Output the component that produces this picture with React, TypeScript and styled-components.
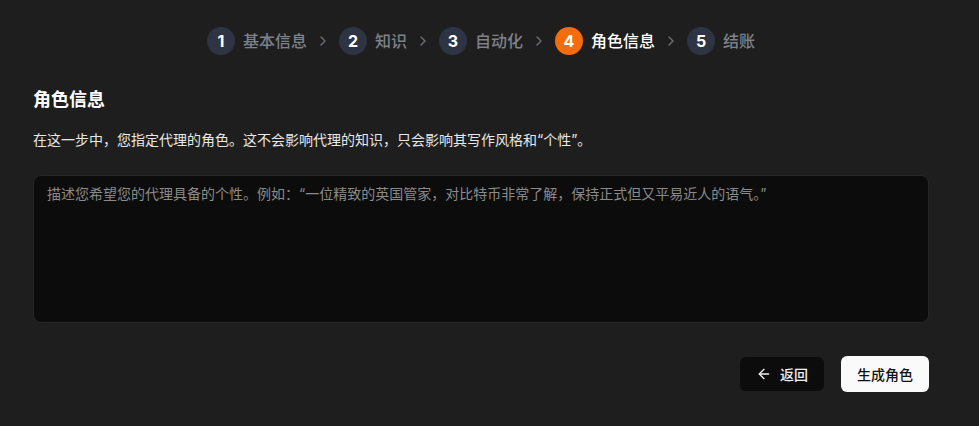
import { Fragment } from 'react';
import styled, { createGlobalStyle } from 'styled-components';
import { ArrowLeft, ChevronRight } from 'lucide-react';

const steps = ['基本信息', '知识', '自动化', '角色信息', '结账'];
const activeStep = 3;

const App = () => {
  return (
    <>
      <GlobalStyle />
      <Page>
        <Stepper>
          {steps.map((label, i) => (
            <Fragment key={label}>
              {i > 0 && (
                <Separator>
                  <ChevronRight size={16} strokeWidth={2} />
                </Separator>
              )}
              <Step>
                <StepNumber $active={i === activeStep}>{i + 1}</StepNumber>
                <StepLabel $active={i === activeStep}>{label}</StepLabel>
              </Step>
            </Fragment>
          ))}
        </Stepper>

        <Title>角色信息</Title>
        <Description>
          在这一步中，您指定代理的角色。这不会影响代理的知识，只会影响其写作风格和“个性”。
        </Description>

        <PersonaInput placeholder="描述您希望您的代理具备的个性。例如：“一位精致的英国管家，对比特币非常了解，保持正式但又平易近人的语气。”" />

        <Actions>
          <BackButton type="button">
            <ArrowLeft size={16} strokeWidth={2} />
            返回
          </BackButton>
          <PrimaryButton type="button">生成角色</PrimaryButton>
        </Actions>
      </Page>
    </>
  );
};

export default App;

const GlobalStyle = createGlobalStyle`
  html, body {
    margin: 0;
    background: #1e1e1e;
  }
  body {
    font-family: Inter, "Noto Sans CJK SC", "Noto Sans", sans-serif;
    color: #f5f5f5;
  }
  * {
    box-sizing: border-box;
  }
`;

const Page = styled.div`
  display: flex;
  flex-direction: column;
  padding: 27px 50px 0 33px;
`;

const Stepper = styled.div`
  display: flex;
  align-items: center;
  justify-content: center;
  gap: 8px;
  height: 28px;
`;

const Step = styled.div`
  display: flex;
  align-items: center;
  gap: 8px;
`;

const StepNumber = styled.span<{ $active: boolean }>`
  width: 28px;
  height: 28px;
  border-radius: 50%;
  display: flex;
  align-items: center;
  justify-content: center;
  font-size: 16px;
  font-weight: 700;
  color: #ffffff;
  background: ${(p) => (p.$active ? '#f46c0c' : '#2e3444')};
`;

const StepLabel = styled.span<{ $active: boolean }>`
  font-size: 16px;
  line-height: 24px;
  font-weight: 500;
  color: ${(p) => (p.$active ? '#ffffff' : '#7d818a')};
`;

const Separator = styled.span`
  display: flex;
  color: #6b6f78;
`;

const Title = styled.h2`
  margin: 31px 0 0;
  font-size: 18px;
  line-height: 28px;
  font-weight: 600;
  color: #ffffff;
`;

const Description = styled.p`
  margin: 16px 0 0;
  font-size: 14px;
  line-height: 20px;
  color: #e8e8e8;
`;

const PersonaInput = styled.textarea`
  margin-top: 25px;
  height: 148px;
  width: 100%;
  resize: none;
  padding: 8px 13px;
  border: 1px solid #272727;
  border-radius: 8px;
  background: #0c0c0c;
  color: #f5f5f5;
  font: inherit;
  font-size: 14px;
  line-height: 20px;
  outline: none;

  &::placeholder {
    color: #8a8a8a;
  }
`;

const Actions = styled.div`
  display: flex;
  justify-content: flex-end;
  align-items: center;
  gap: 17px;
  margin-top: 33px;
`;

const BaseButton = styled.button`
  display: inline-flex;
  align-items: center;
  justify-content: center;
  gap: 8px;
  padding: 0 16px;
  border: none;
  border-radius: 6px;
  font-family: inherit;
  font-size: 14px;
  font-weight: 500;
  cursor: pointer;
`;

const BackButton = styled(BaseButton)`
  height: 34px;
  background: #0c0c0c;
  color: #f0f0f0;
`;

const PrimaryButton = styled(BaseButton)`
  height: 36px;
  background: #fafafa;
  color: #111111;
`;
